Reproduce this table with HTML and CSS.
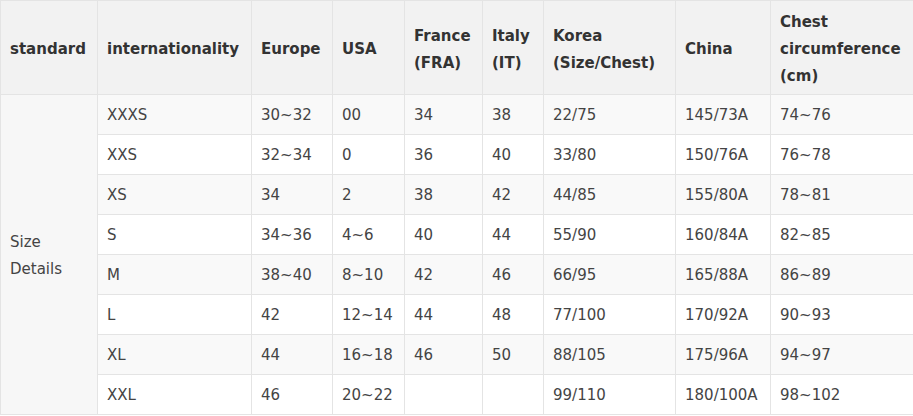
FILE: index.html
```html
<!DOCTYPE html>
<html lang="en">
<head>
<meta charset="utf-8">
<title>Size chart</title>
<link rel="stylesheet" href="styles.css">
</head>
<body>
<table class="size-table">
  <colgroup>
    <col class="c1"><col class="c2"><col class="c3"><col class="c4"><col class="c5"><col class="c6"><col class="c7"><col class="c8"><col class="c9">
  </colgroup>
  <thead>
    <tr>
      <th>standard</th>
      <th>internationality</th>
      <th>Europe</th>
      <th>USA</th>
      <th>France<br>(FRA)</th>
      <th>Italy<br>(IT)</th>
      <th>Korea<br>(Size/Chest)</th>
      <th>China</th>
      <th>Chest<br>circumference<br>(cm)</th>
    </tr>
  </thead>
  <tbody>
    <tr class="alt"><td class="group" rowspan="8">Size<br>Details</td><td>XXXS</td><td>30~32</td><td>00</td><td>34</td><td>38</td><td>22/75</td><td>145/73A</td><td>74~76</td></tr>
    <tr><td>XXS</td><td>32~34</td><td>0</td><td>36</td><td>40</td><td>33/80</td><td>150/76A</td><td>76~78</td></tr>
    <tr class="alt"><td>XS</td><td>34</td><td>2</td><td>38</td><td>42</td><td>44/85</td><td>155/80A</td><td>78~81</td></tr>
    <tr><td>S</td><td>34~36</td><td>4~6</td><td>40</td><td>44</td><td>55/90</td><td>160/84A</td><td>82~85</td></tr>
    <tr class="alt"><td>M</td><td>38~40</td><td>8~10</td><td>42</td><td>46</td><td>66/95</td><td>165/88A</td><td>86~89</td></tr>
    <tr><td>L</td><td>42</td><td>12~14</td><td>44</td><td>48</td><td>77/100</td><td>170/92A</td><td>90~93</td></tr>
    <tr class="alt"><td>XL</td><td>44</td><td>16~18</td><td>46</td><td>50</td><td>88/105</td><td>175/96A</td><td>94~97</td></tr>
    <tr><td>XXL</td><td>46</td><td>20~22</td><td></td><td></td><td>99/110</td><td>180/100A</td><td>98~102</td></tr>
  </tbody>
</table>
</body>
</html>
```

FILE: styles.css
```css
html, body {
  margin: 0;
  padding: 0;
  background: #ffffff;
}

.size-table {
  border-collapse: collapse;
  table-layout: fixed;
  width: 913px;
  font-family: "DejaVu Sans", Verdana, sans-serif;
  font-size: 15px;
  line-height: 27px;
  color: #444444;
}

.c1 { width: 97px; }
.c2 { width: 154px; }
.c3 { width: 81px; }
.c4 { width: 72px; }
.c5 { width: 78px; }
.c6 { width: 61px; }
.c7 { width: 132px; }
.c8 { width: 95px; }
.c9 { width: 143px; }

.size-table th,
.size-table td {
  border: 1px solid #e4e4e4;
  padding: 7px 9px 5px;
  text-align: left;
  vertical-align: middle;
  white-space: nowrap;
}

.size-table th {
  background: #f2f2f2;
  color: #333333;
  font-weight: bold;
  padding: 8px 9px 4px;
}

.size-table tbody tr {
  background: #ffffff;
}

.size-table tbody tr.alt {
  background: #f9f9f9;
}

.size-table td.group {
  background: #f7f7f7;
}
```
